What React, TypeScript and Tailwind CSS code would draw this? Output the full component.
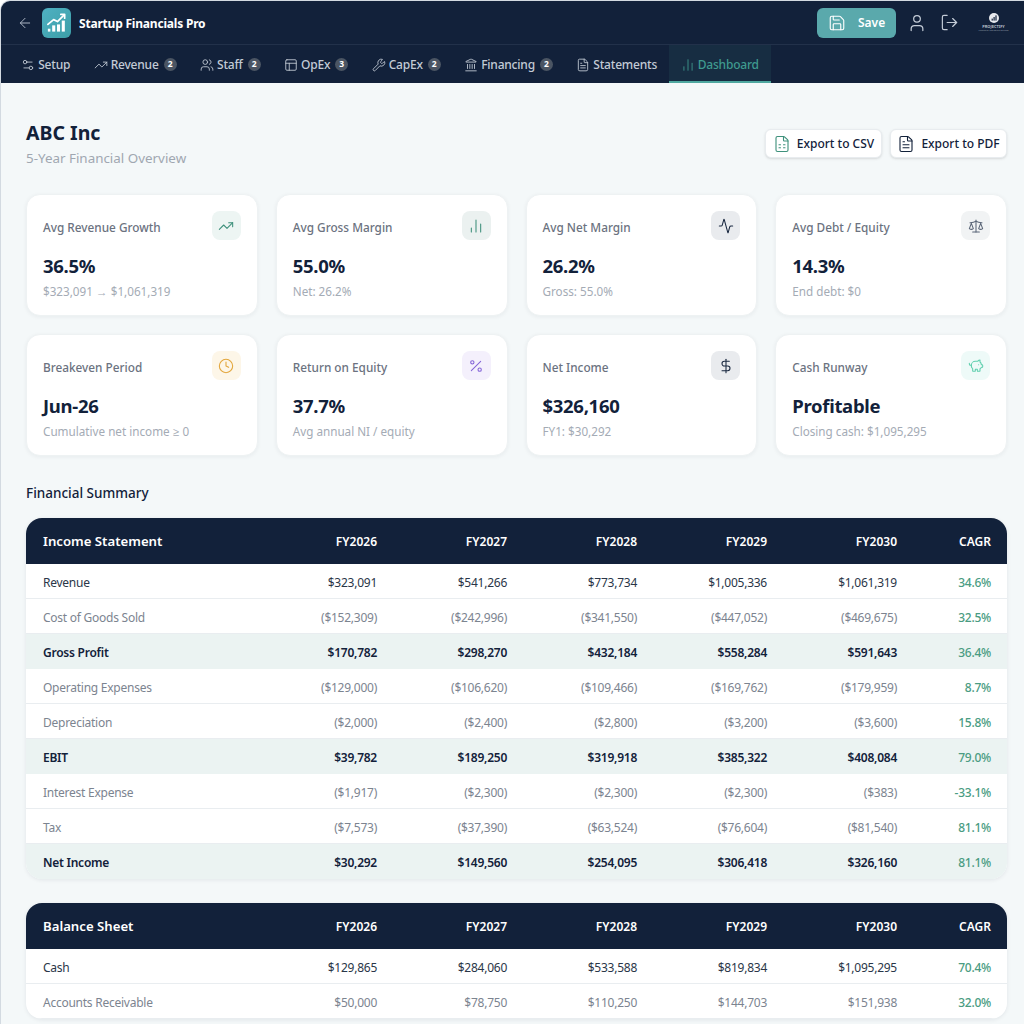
import React from 'react';
import {
  Activity, ArrowLeft, ChartNoAxesColumn, Clock, DollarSign, FileSpreadsheet, FileText, Landmark, LogOut,
  PanelsTopLeft, Percent, PiggyBank, Save, Scale, Settings2, TrendingUp, User, Users, Wrench,
} from 'lucide-react';

const tabs = [
  { label: 'Setup', icon: Settings2 },
  { label: 'Revenue', icon: TrendingUp, badge: 2 },
  { label: 'Staff', icon: Users, badge: 2 },
  { label: 'OpEx', icon: PanelsTopLeft, badge: 3 },
  { label: 'CapEx', icon: Wrench, badge: 2 },
  { label: 'Financing', icon: Landmark, badge: 2 },
  { label: 'Statements', icon: FileText },
];

const kpis = [
  { title: 'Avg Revenue Growth', value: '36.5%', sub: '$323,091 → $1,061,319', icon: TrendingUp, box: 'bg-[#edf5f3]', tint: 'text-[#3f917c]' },
  { title: 'Avg Gross Margin', value: '55.0%', sub: 'Net: 26.2%', icon: ChartNoAxesColumn, box: 'bg-[#ebf1f0]', tint: 'text-[#3f917c]' },
  { title: 'Avg Net Margin', value: '26.2%', sub: 'Gross: 55.0%', icon: Activity, box: 'bg-[#e9ebee]', tint: 'text-[#1a2840]' },
  { title: 'Avg Debt / Equity', value: '14.3%', sub: 'End debt: $0', icon: Scale, box: 'bg-[#f1f3f4]', tint: 'text-[#5b6678]' },
  { title: 'Breakeven Period', value: 'Jun-26', sub: 'Cumulative net income ≥ 0', icon: Clock, box: 'bg-[#fdf6e8]', tint: 'text-[#e3a63c]' },
  { title: 'Return on Equity', value: '37.7%', sub: 'Avg annual NI / equity', icon: Percent, box: 'bg-[#f4f0fc]', tint: 'text-[#8465d8]' },
  { title: 'Net Income', value: '$326,160', sub: 'FY1: $30,292', icon: DollarSign, box: 'bg-[#e9ebee]', tint: 'text-[#1a2840]' },
  { title: 'Cash Runway', value: 'Profitable', sub: 'Closing cash: $1,095,295', icon: PiggyBank, box: 'bg-[#eefaf8]', tint: 'text-[#5fcfae]' },
];

type Row = { name: string; values: string[]; cagr: string; kind?: 'muted' | 'total' };

const incomeRows: Row[] = [
  { name: 'Revenue', values: ['$323,091', '$541,266', '$773,734', '$1,005,336', '$1,061,319'], cagr: '34.6%' },
  { name: 'Cost of Goods Sold', values: ['($152,309)', '($242,996)', '($341,550)', '($447,052)', '($469,675)'], cagr: '32.5%', kind: 'muted' },
  { name: 'Gross Profit', values: ['$170,782', '$298,270', '$432,184', '$558,284', '$591,643'], cagr: '36.4%', kind: 'total' },
  { name: 'Operating Expenses', values: ['($129,000)', '($106,620)', '($109,466)', '($169,762)', '($179,959)'], cagr: '8.7%', kind: 'muted' },
  { name: 'Depreciation', values: ['($2,000)', '($2,400)', '($2,800)', '($3,200)', '($3,600)'], cagr: '15.8%', kind: 'muted' },
  { name: 'EBIT', values: ['$39,782', '$189,250', '$319,918', '$385,322', '$408,084'], cagr: '79.0%', kind: 'total' },
  { name: 'Interest Expense', values: ['($1,917)', '($2,300)', '($2,300)', '($2,300)', '($383)'], cagr: '-33.1%', kind: 'muted' },
  { name: 'Tax', values: ['($7,573)', '($37,390)', '($63,524)', '($76,604)', '($81,540)'], cagr: '81.1%', kind: 'muted' },
  { name: 'Net Income', values: ['$30,292', '$149,560', '$254,095', '$306,418', '$326,160'], cagr: '81.1%', kind: 'total' },
];

const balanceRows: Row[] = [
  { name: 'Cash', values: ['$129,865', '$284,060', '$533,588', '$819,834', '$1,095,295'], cagr: '70.4%' },
  { name: 'Accounts Receivable', values: ['$50,000', '$78,750', '$110,250', '$144,703', '$151,938'], cagr: '32.0%', kind: 'muted' },
];

const years = ['FY2026', 'FY2027', 'FY2028', 'FY2029', 'FY2030'];
const gridCols = 'grid grid-cols-[221px_130px_130px_130px_130px_130px_94px] pr-4 items-center';

const AppLogo = () => (
  <div className="w-[29px] h-[30px] rounded-md bg-gradient-to-br from-[#4fb0c2] to-[#3c9fa8] flex items-center justify-center">
    <svg viewBox="0 0 24 24" className="w-[23px] h-[23px]" fill="none">
      <path d="M3 14 L9 9 L13 11 L20 4" stroke="white" strokeWidth="1.8" strokeLinecap="round" strokeLinejoin="round" />
      <path d="M16.5 3.5 H20.5 V7.5" stroke="white" strokeWidth="1.8" strokeLinecap="round" strokeLinejoin="round" />
      <rect x="3" y="18.5" width="2.6" height="3" fill="white" />
      <rect x="7.5" y="15" width="3.2" height="6.5" fill="white" />
      <rect x="12.5" y="14" width="3.2" height="7.5" fill="white" />
      <rect x="17.5" y="10" width="3.2" height="11.5" fill="white" />
    </svg>
  </div>
);

const BrandMark = () => (
  <div className="ml-[21px] w-[27px] flex flex-col items-center">
    <svg viewBox="0 0 10 10" className="w-[10px] h-[10px]">
      <circle cx="5" cy="5" r="5" fill="#e8eaee" />
      <rect x="2.6" y="5.6" width="1.2" height="2" fill="#12213a" />
      <rect x="4.5" y="4" width="1.2" height="3.6" fill="#12213a" />
      <rect x="6.4" y="2.4" width="1.2" height="5.2" fill="#12213a" />
    </svg>
    <span className="mt-[1px] text-[4px] leading-[5px] font-semibold text-[#c3cbd6] whitespace-nowrap">PROJECTIFY</span>
    <span className="text-[2.5px] leading-[3px] text-[#8f99a8] whitespace-nowrap">Financial Modeling Studio</span>
  </div>
);

const FinTable = ({ title, rows }: { title: string; rows: Row[] }) => (
  <div className="rounded-[16px] overflow-hidden bg-white shadow-[0_1px_4px_rgba(15,30,50,0.08)]">
    <div className={`${gridCols} h-[46px] pt-[1px] bg-[#12213a] text-white`}>
      <div className="pl-[17px] text-[13.2px] font-semibold">{title}</div>
      {years.map((y) => (
        <div key={y} className="text-right text-[12px] font-semibold">{y}</div>
      ))}
      <div className="text-right text-[12px] font-semibold">CAGR</div>
    </div>
    {rows.map((r) => (
      <div
        key={r.name}
        className={`${gridCols} h-[35px] pt-[3px] border-b text-[12px] tracking-[-0.25px] ${
          r.kind === 'total'
            ? 'bg-[#ebf3f2] border-[#ebf3f2] font-semibold text-[#12213a]'
            : r.kind === 'muted'
              ? 'border-[#e9edf0] text-[#7c8490]'
              : 'border-[#e9edf0] text-[#2a3648]'
        }`}
      >
        <div className="pl-[17px]">{r.name}</div>
        {r.values.map((v, i) => (
          <div key={i} className="text-right">{v}</div>
        ))}
        <div className="text-right font-medium text-[#4a9c82]">{r.cagr}</div>
      </div>
    ))}
  </div>
);

export default function App() {
  return (
    <div className="h-[1024px] overflow-hidden bg-white font-['Noto_Sans','Open_Sans',sans-serif]">
      <div className="h-full overflow-hidden bg-[#f4f8f9] border-t border-l border-[#d3dae1] rounded-tl-[10px]">
        {/* Top bar */}
        <header className="bg-[#12213a]">
          <div className="h-[44px] flex items-center border-b border-[#22314a] pl-4 pr-[17px]">
            <ArrowLeft strokeWidth={1.5} className="w-4 h-4 text-[#aab4c2]" />
            <div className="ml-[9px]"><AppLogo /></div>
            <span className="ml-2 pt-[2px] text-[12px] font-bold tracking-[-0.2px] text-white">Startup Financials Pro</span>
            <button className="ml-auto w-[79px] h-[30px] rounded-md bg-[#5aa9ac] flex items-center pl-[11px] gap-3 text-white text-[12px] font-semibold">
              <Save strokeWidth={1.5} className="w-[18px] h-[18px]" />
              <span className="pt-[1px]">Save</span>
            </button>
            <User strokeWidth={1.5} className="ml-[10.5px] w-5 h-5 text-[#c3cbd6]" />
            <LogOut strokeWidth={1.5} className="ml-[13.5px] w-[19px] h-[19px] text-[#c3cbd6]" />
            <BrandMark />
          </div>
          <nav className="h-[38px] flex pl-[8.5px]">
            {tabs.map((t) => (
              <div key={t.label} className="h-full px-[11.7px] pt-[1px] flex items-center gap-[3px] text-[12px] tracking-[-0.2px] font-medium text-[#c3cbd6]">
                <t.icon strokeWidth={1.5} className="w-[14px] h-[14px]" />
                <span>{t.label}</span>
                {t.badge && (
                  <span className="ml-[2px] w-[13px] h-[13px] rounded-full bg-[#4b5563] text-white text-[8.5px] font-bold tracking-normal flex items-center justify-center">
                    {t.badge}
                  </span>
                )}
              </div>
            ))}
            <div className="h-full px-3 pt-[1px] flex items-center gap-[3px] text-[12px] tracking-[-0.2px] font-medium text-[#3f9a8f] bg-[#172d42] shadow-[inset_0_-2px_0_#4fa8a0]">
              <ChartNoAxesColumn strokeWidth={1.5} className="w-[14px] h-[14px]" />
              <span>Dashboard</span>
            </div>
          </nav>
        </header>

        <main className="pl-[25px] pr-[17px] pt-[36px]">
          <div className="flex justify-between items-start">
            <div>
              <h1 className="text-[19.5px] leading-[28px] font-bold text-[#12213a]">ABC Inc</h1>
              <p className="mt-[1px] text-[13.4px] leading-[20px] text-[#a0a7b1]">5-Year Financial Overview</p>
            </div>
            <div className="flex gap-2 pt-[10px]">
              <button className="h-[29px] w-[117px] rounded-md bg-white border border-[#e8ecef] shadow-sm flex items-center justify-center gap-[6px] text-[12px] font-medium text-[#12213a]">
                <FileSpreadsheet strokeWidth={1.5} className="w-[18px] h-[18px] text-[#3f917c]" />
                <span className="pt-[1px]">Export to CSV</span>
              </button>
              <button className="h-[29px] w-[117px] rounded-md bg-white border border-[#e8ecef] shadow-sm flex items-center justify-center gap-[6px] text-[12px] font-medium text-[#12213a]">
                <FileText strokeWidth={1.5} className="w-[18px] h-[18px]" />
                <span className="pt-[1px]">Export to PDF</span>
              </button>
            </div>
          </div>

          <div className="mt-[26px] grid grid-cols-4 gap-[18px]">
            {kpis.map((k) => (
              <div key={k.title} className="h-[122px] rounded-[14px] bg-white border border-[#eef2f3] shadow-[0_1px_4px_rgba(15,30,50,0.06)] px-4 pt-4">
                <div className="flex justify-between items-start">
                  <span className="mt-[7px] text-[11.8px] leading-[18px] font-medium text-[#6b7280]">{k.title}</span>
                  <div className={`w-[29px] h-[29px] rounded-lg flex items-center justify-center ${k.box}`}>
                    <k.icon strokeWidth={1.6} className={`w-4 h-4 ${k.tint}`} />
                  </div>
                </div>
                <div className="mt-[13px] text-[18.5px] leading-[26px] font-bold tracking-[-0.3px] text-[#12213a]">{k.value}</div>
                <div className="mt-[3px] text-[11.7px] leading-[18px] text-[#a4abb5]">{k.sub}</div>
              </div>
            ))}
          </div>

          <h2 className="mt-[27px] mb-[15px] text-[13.5px] leading-[20px] font-medium text-[#12213a]">Financial Summary</h2>
          <FinTable title="Income Statement" rows={incomeRows} />
          <div className="mt-6">
            <FinTable title="Balance Sheet" rows={balanceRows} />
          </div>
        </main>
      </div>
    </div>
  );
}
